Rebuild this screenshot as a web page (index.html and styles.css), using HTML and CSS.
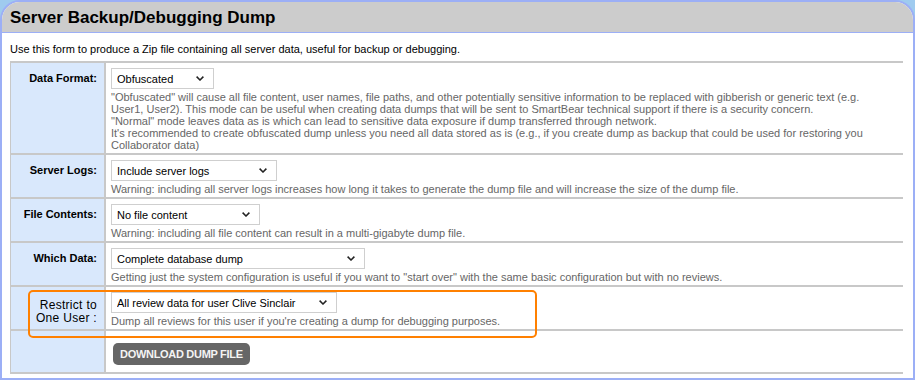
FILE: index.html
```html
<!DOCTYPE html>
<html lang="en">
<head>
    <meta charset="UTF-8">
    <title>Server Backup/Debugging Dump</title>
    <link rel="stylesheet" href="styles.css">
</head>
<body>
    <div class="panel">
        <h1 class="panel-title">Server Backup/Debugging Dump</h1>
        <div class="panel-body">
            <p class="intro">Use this form to produce a Zip file containing all server data, useful for backup or debugging.</p>

            <div class="form-wrap">
                <table class="form-table">
                    <tr class="row-format">
                        <th>Data Format:</th>
                        <td>
                            <select class="sel sel-format">
                                <option>Obfuscated</option>
                                <option>Normal</option>
                            </select>
                            <div class="desc">"Obfuscated" will cause all file content, user names, file paths, and other potentially sensitive information to be replaced with gibberish or generic text (e.g. User1, User2). This mode can be useful when creating data dumps that will be sent to SmartBear technical support if there is a security concern.<br>"Normal" mode leaves data as is which can lead to sensitive data exposure if dump transferred through network.<br>It's recommended to create obfuscated dump unless you need all data stored as is (e.g., if you create dump as backup that could be used for restoring you Collaborator data)</div>
                        </td>
                    </tr>
                    <tr>
                        <th>Server Logs:</th>
                        <td>
                            <select class="sel sel-logs">
                                <option>Include server logs</option>
                            </select>
                            <div class="desc">Warning: including all server logs increases how long it takes to generate the dump file and will increase the size of the dump file.</div>
                        </td>
                    </tr>
                    <tr>
                        <th>File Contents:</th>
                        <td>
                            <select class="sel sel-files">
                                <option>No file content</option>
                            </select>
                            <div class="desc">Warning: including all file content can result in a multi-gigabyte dump file.</div>
                        </td>
                    </tr>
                    <tr>
                        <th>Which Data:</th>
                        <td>
                            <select class="sel sel-data">
                                <option>Complete database dump</option>
                            </select>
                            <div class="desc">Getting just the system configuration is useful if you want to "start over" with the same basic configuration but with no reviews.</div>
                        </td>
                    </tr>
                    <tr>
                        <th class="plain">Restrict to<br>One User :</th>
                        <td>
                            <select class="sel sel-user">
                                <option>All review data for user Clive Sinclair</option>
                            </select>
                            <div class="desc">Dump all reviews for this user if you're creating a dump for debugging purposes.</div>
                        </td>
                    </tr>
                    <tr class="row-action">
                        <th></th>
                        <td><button class="btn">DOWNLOAD DUMP FILE</button></td>
                    </tr>
                </table>
                <!-- callout round the user restriction row -->
                <div class="callout"></div>
            </div>
        </div>
    </div>
</body>
</html>
```

FILE: styles.css
```css
body {
    margin: 0;
    padding: 0;
    font-family: "Liberation Sans", Arial, sans-serif;
    background-color: #9fcbef;
    color: #000;
}

.panel {
    width: 911px;
    height: 376px;
    background-color: #ffffff;
    border: 2px solid #9caff6;
    border-radius: 20px 20px 0 0;
    overflow: hidden;
}

.panel-title {
    margin: 0;
    height: 30px;
    line-height: 31px;
    padding-left: 8px;
    font-size: 17px;
    font-weight: bold;
    background-color: #cccccc;
    border-bottom: 1px solid #9caff6;
}

.panel-body {
    padding: 0 9px 0 8px;
}

.intro {
    margin: 0;
    padding-top: 10px;
    height: 18px;
    font-size: 11px;
    line-height: 12px;
}

.form-wrap {
    position: relative;
}

.form-table {
    width: 893px;
    border-collapse: collapse;
    border-top: 2px solid #c8c8c8;
    border-left: 1px solid #c8c8c8;
    border-bottom: 1px solid #c8c8c8;
}

.form-table tr {
    border-bottom: 2px solid #c8c8c8;
}

.form-table th {
    width: 84px;
    padding: 9px 7px 0 2px;
    vertical-align: top;
    text-align: right;
    font-size: 11px;
    font-weight: bold;
    line-height: 13px;
    background-color: #d9e8fc;
    border-right: 2px solid #c8c8c8;
}

.form-table th.plain {
    font-weight: normal;
    font-size: 12px;
    letter-spacing: 0.3px;
    line-height: 13px;
    padding-top: 12px;
}

.form-table td {
    padding: 5px 20px 2px 5px;
    vertical-align: top;
}

.sel {
    display: block;
    height: 21px;
    margin-bottom: 2px;
    padding: 0 20px 0 5px;
    font-family: "Liberation Sans", Arial, sans-serif;
    font-size: 11px;
    color: #000;
    background-color: #fff;
    background-image: url("data:image/svg+xml,%3Csvg xmlns='http://www.w3.org/2000/svg' width='8' height='5' viewBox='0 0 8 5'%3E%3Cpath d='M0.6 0.6 L4 4 L7.4 0.6' fill='none' stroke='%23222' stroke-width='1.5'/%3E%3C/svg%3E");
    background-repeat: no-repeat;
    background-position: right 9px center;
    border: 1px solid #cfcfcf;
    border-radius: 0;
    appearance: none;
    -webkit-appearance: none;
}

.sel-format { width: 103px; }
.sel-logs { width: 166px; }
.sel-files { width: 149px; }
.sel-data { width: 254px; }
.sel-user { width: 226px; }

.desc {
    font-size: 11px;
    line-height: 12px;
    color: #666666;
}

.row-action td {
    padding: 12px 6px 7px 7px;
}

.btn {
    display: block;
    height: 22px;
    padding: 0 7px;
    font-family: "Liberation Sans", Arial, sans-serif;
    font-size: 11px;
    font-weight: bold;
    letter-spacing: -0.3px;
    color: #f4f4f4;
    background-color: #666666;
    border: none;
    border-radius: 5px;
    cursor: pointer;
}

.callout {
    position: absolute;
    left: 18px;
    top: 229px;
    width: 505px;
    height: 44px;
    border: 2px solid #ff8000;
    border-radius: 5px;
    pointer-events: none;
}
```
